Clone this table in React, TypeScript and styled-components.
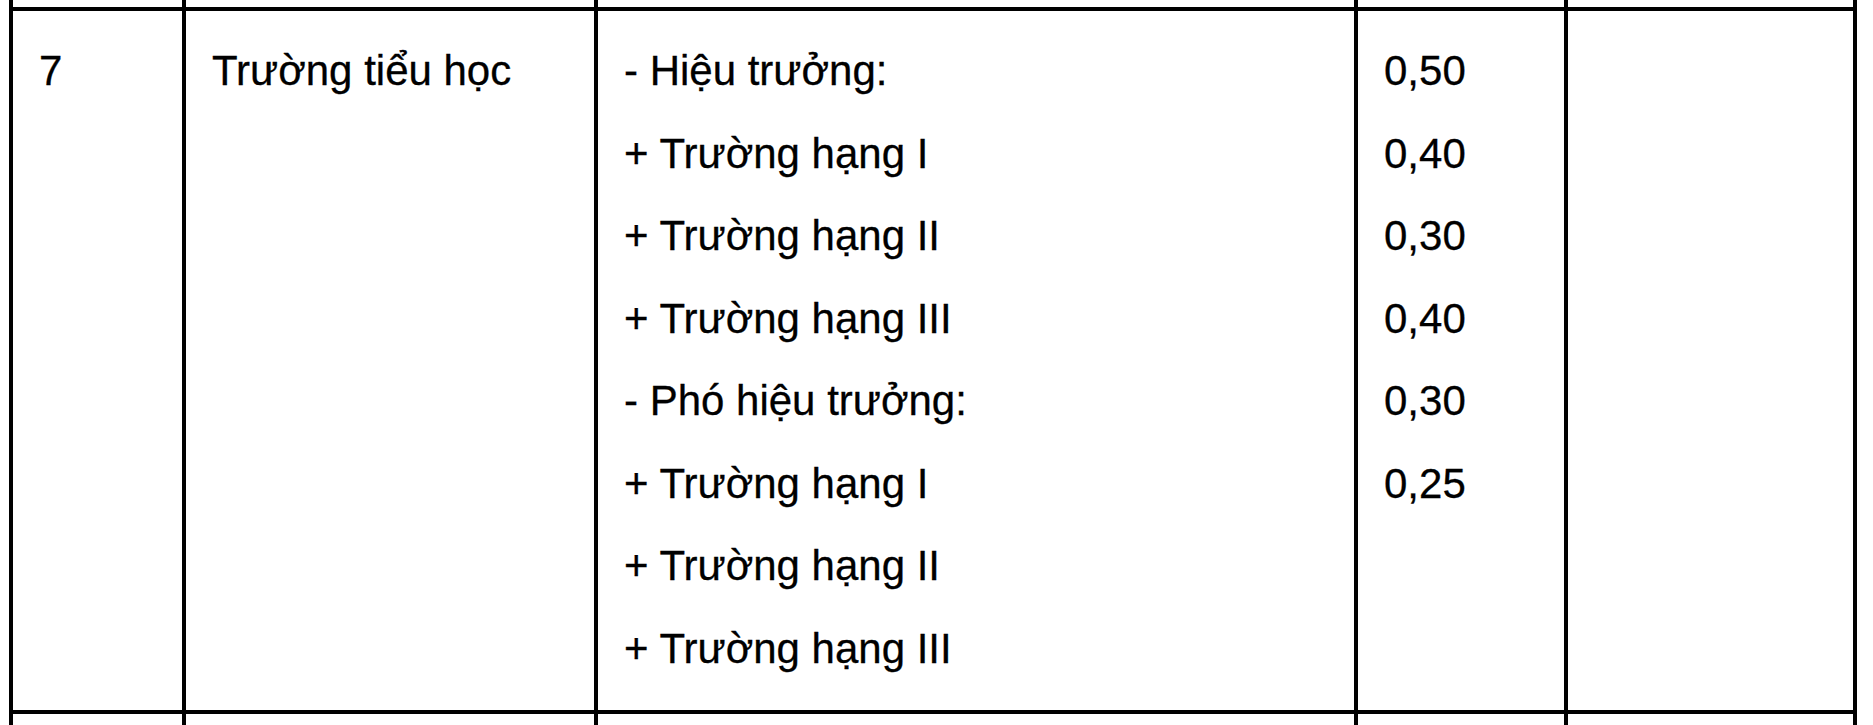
import React from "react";
import styled, { createGlobalStyle } from "styled-components";

const Global = createGlobalStyle`
  html, body {
    margin: 0;
    padding: 0;
    background: #ffffff;
  }
  body {
    font-family: "Liberation Sans", Arial, sans-serif;
    color: #000;
  }
`;

const Page = styled.div`
  width: 1873px;
  height: 725px;
  padding-left: 9px;
  box-sizing: border-box;
  overflow: hidden;
`;

const Table = styled.div`
  display: grid;
  width: 1848px;
  grid-template-columns: 169px 408px 756px 206px 285px;
  grid-template-rows: 7px 699px 14px;
  column-gap: 4px;
  row-gap: 4px;
  padding: 0 4px;
  box-sizing: border-box;
  background: #000;
`;

const EdgeCell = styled.div`
  background: #fff;
`;

const Cell = styled.div`
  background: #fff;
  padding: 19px 20px 0 26px;
  font-size: 42px;
  line-height: 82.5px;
  white-space: nowrap;
  -webkit-text-stroke: 0.3px #000;
`;

const Line = styled.div``;

const col3 = [
  "- Hiệu trưởng:",
  "+ Trường hạng I",
  "+ Trường hạng II",
  "+ Trường hạng III",
  "- Phó hiệu trưởng:",
  "+ Trường hạng I",
  "+ Trường hạng II",
  "+ Trường hạng III",
];

const col4 = ["0,50", "0,40", "0,30", "0,40", "0,30", "0,25"];

export default function App() {
  const edges = [0, 1, 2, 3, 4];
  return (
    <>
      <Global />
      <Page>
        <Table>
          {edges.map((i) => (
            <EdgeCell key={`t${i}`} />
          ))}
          <Cell>
            <Line>7</Line>
          </Cell>
          <Cell>
            <Line>Trường tiểu học</Line>
          </Cell>
          <Cell>
            {col3.map((t, i) => (
              <Line key={i}>{t}</Line>
            ))}
          </Cell>
          <Cell>
            {col4.map((t, i) => (
              <Line key={i}>{t}</Line>
            ))}
          </Cell>
          <Cell />
          {edges.map((i) => (
            <EdgeCell key={`b${i}`} />
          ))}
        </Table>
      </Page>
    </>
  );
}
